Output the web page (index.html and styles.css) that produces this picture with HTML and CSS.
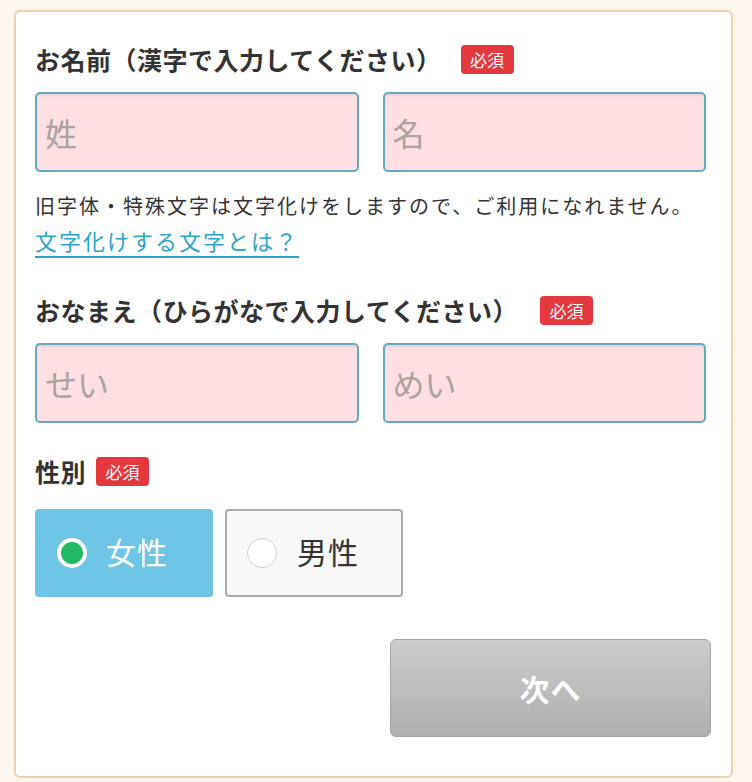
FILE: index.html
```html
<!DOCTYPE html>
<html lang="ja">
<head>
<meta charset="utf-8">
<title>お名前入力</title>
<link rel="stylesheet" href="styles.css">
</head>
<body>
<div class="card">
  <div class="field-head">
    <span class="field-title">お名前（漢字で入力してください）</span>
    <span class="badge">必須</span>
  </div>
  <div class="name-row">
    <input class="text-input" type="text" placeholder="姓">
    <input class="text-input" type="text" placeholder="名">
  </div>
  <p class="note">旧字体・特殊文字は文字化けをしますので、ご利用になれません。<br><a class="note-link" href="#">文字化けする文字とは？</a></p>

  <div class="field-head field-head-kana">
    <span class="field-title">おなまえ（ひらがなで入力してください）</span>
    <span class="badge">必須</span>
  </div>
  <div class="name-row">
    <input class="text-input" type="text" placeholder="せい">
    <input class="text-input" type="text" placeholder="めい">
  </div>

  <div class="field-head field-head-gender">
    <span class="field-title">性別</span>
    <span class="badge">必須</span>
  </div>
  <div class="gender-row">
    <label class="gender-option is-selected"><span class="radio-dot"></span><span class="gender-text">女性</span></label>
    <label class="gender-option"><span class="radio-dot"></span><span class="gender-text">男性</span></label>
  </div>

  <div class="actions">
    <button class="next-btn" type="button">次へ</button>
  </div>
</div>
</body>
</html>
```

FILE: styles.css
```css
* { box-sizing: border-box; }

html, body {
  margin: 0;
  padding: 0;
  background: #fdf7ef;
}

body {
  font-family: "Noto Sans CJK JP", "Noto Sans", sans-serif;
  color: #333;
  padding: 10px 19px 6px 14px;
}

.card {
  background: #fff;
  border: 2px solid #efcfa9;
  border-radius: 6px;
  padding: 32px 20px 39px 19px;
}

.field-head {
  display: flex;
  align-items: center;
  height: 30px;
}

.field-title {
  font-size: 25px;
  font-weight: 700;
  letter-spacing: 0.5px;
  line-height: 30px;
  color: #333;
  white-space: nowrap;
}

.badge {
  display: inline-flex;
  align-items: center;
  justify-content: center;
  width: 53px;
  height: 29px;
  margin-left: 19px;
  background: #e3393e;
  color: #fff;
  font-size: 17px;
  border-radius: 4px;
  line-height: 1;
}

.field-head-kana .badge { margin-left: 22px; }
.field-head-gender .badge { margin-left: 10px; }

.name-row {
  display: grid;
  grid-template-columns: 1fr 1fr;
  gap: 24px;
  margin: 18px 5px 0 0;
}

.text-input {
  display: block;
  width: 100%;
  height: 80px;
  margin: 0;
  padding: 0 8px;
  border: 2px solid #63a9bf;
  border-radius: 5px;
  background: #ffdfe1;
  box-shadow: inset 0 2px 2px rgba(0, 0, 0, 0.06);
  font-family: inherit;
  font-size: 32px;
  color: #333;
  outline: none;
}

.text-input::placeholder {
  color: #aaa2a3;
}

.note {
  margin: 17px 0 0;
  font-size: 20px;
  letter-spacing: 2px;
  line-height: 34px;
  color: #333;
}

.note-link {
  font-size: 22px;
  letter-spacing: 2px;
  color: #2aa5cc;
  text-decoration: underline;
  text-decoration-color: #2aa5cc;
  text-underline-offset: 6px;
  text-decoration-thickness: 1.5px;
}

.field-head-kana { margin-top: 36px; }
.field-head-gender { margin-top: 33px; }

.gender-row {
  display: flex;
  gap: 12px;
  margin-top: 23px;
}

.gender-option {
  display: flex;
  align-items: center;
  width: 178px;
  height: 88px;
  padding-left: 20px;
  border: 2px solid #aaa;
  border-radius: 4px;
  background: #f8f8f6;
  cursor: pointer;
}

.gender-option.is-selected {
  background: #6ec5e6;
  border-color: #6ec5e6;
}

.radio-dot {
  width: 30px;
  height: 30px;
  border-radius: 50%;
  background: #fff;
  border: 1px solid #cfcfcf;
  flex: none;
}

.is-selected .radio-dot {
  background: #22b866;
  border: 4px solid #fff;
}

.gender-text {
  margin-left: 20px;
  font-size: 30px;
  letter-spacing: 1px;
  line-height: 1;
  padding-bottom: 4px;
  color: #333;
}

.is-selected .gender-text {
  color: #fff;
  margin-left: 19px;
}

.actions {
  display: flex;
  justify-content: flex-end;
  margin-top: 42px;
}

.next-btn {
  width: 321px;
  height: 98px;
  border: 1px solid #a6a6a6;
  border-radius: 6px;
  background: linear-gradient(#cccccc, #afafaf);
  color: #fff;
  font-family: inherit;
  font-size: 30px;
  font-weight: 700;
  letter-spacing: 1px;
  cursor: pointer;
}
```
